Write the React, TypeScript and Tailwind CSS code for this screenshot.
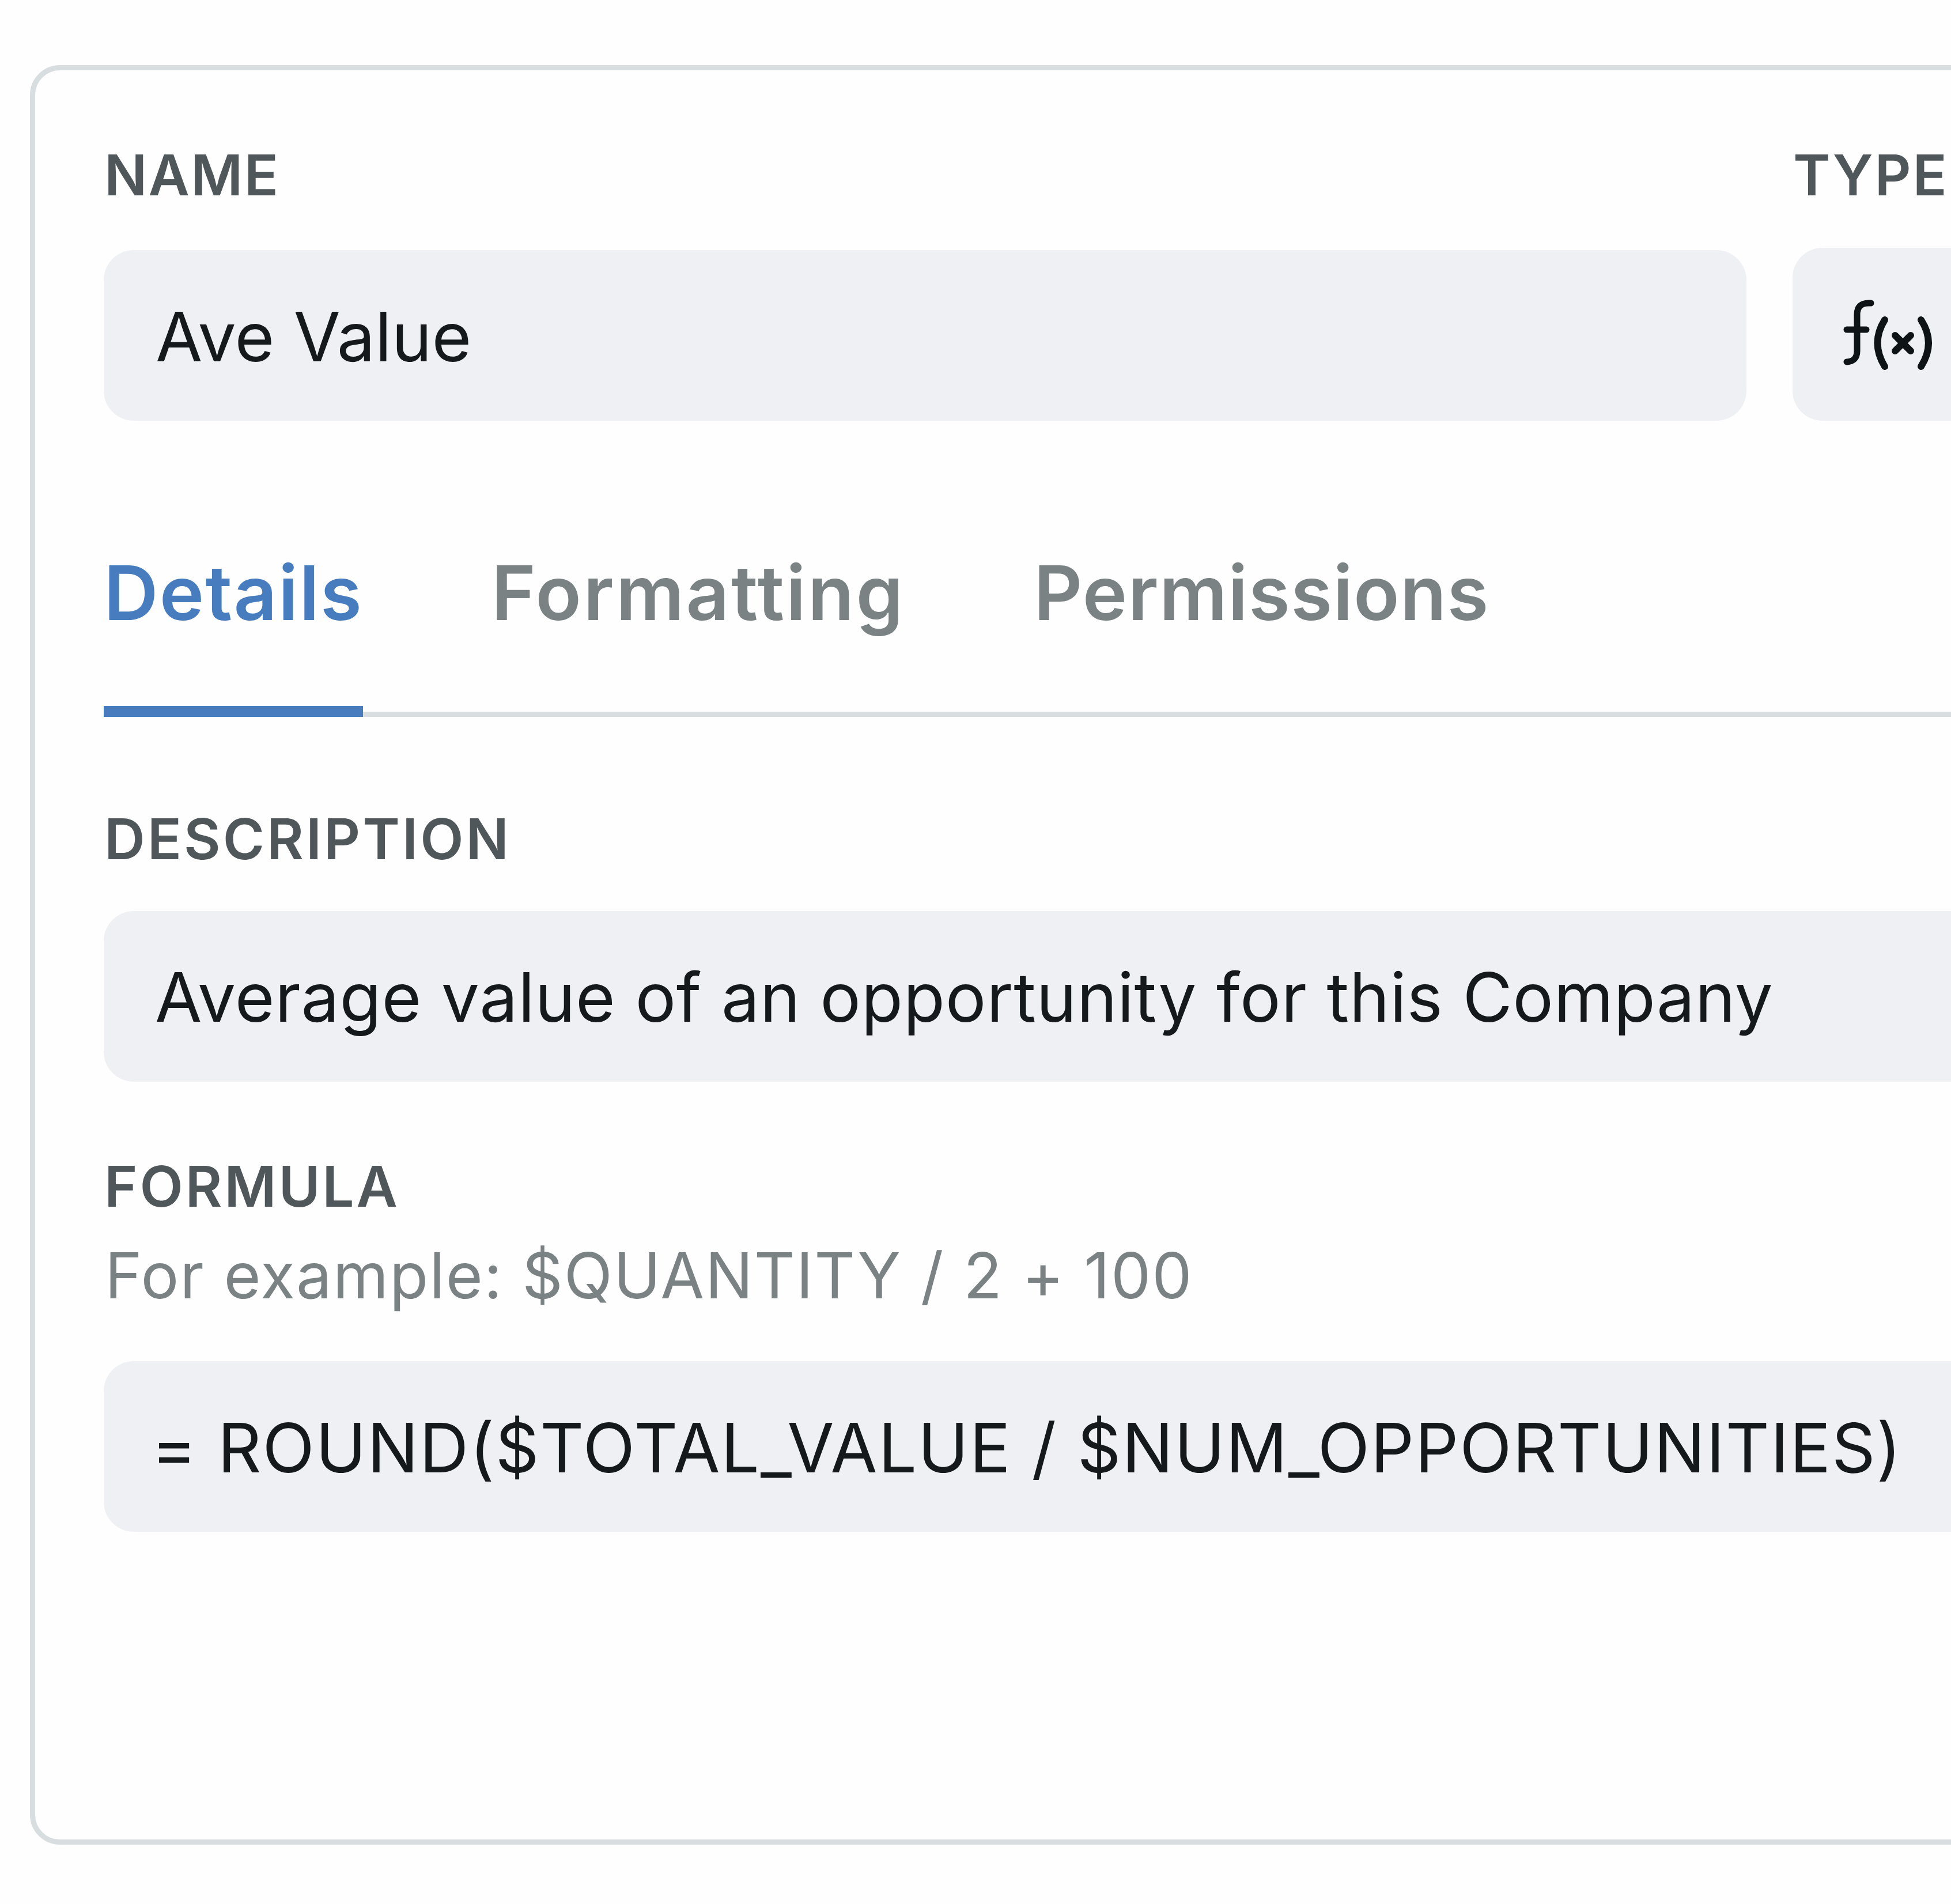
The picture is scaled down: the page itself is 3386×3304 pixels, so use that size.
import React, { useState } from 'react';

type FieldProps = {
  label: string;
  className?: string;
  children: React.ReactNode;
};

const Field: React.FC<FieldProps> = ({ label, className = '', children }) => (
  <div className={`flex flex-col ${className}`}>
    <label className="pl-px text-[98px] leading-[120px] font-[580] text-[#50575b]">{label}</label>
    {children}
  </div>
);

const FunctionIcon: React.FC = () => (
  <svg
    width="160"
    height="130"
    viewBox="0 0 160 130"
    fill="none"
    stroke="currentColor"
    strokeWidth="11"
    strokeLinecap="round"
    strokeLinejoin="round"
  >
    <path d="M52 11H48Q28 11 28 31V94Q28 112 10 113" />
    <path d="M10 57H44" />
    <path d="M76 40Q51 80 76 121" strokeWidth="12" />
    <path d="M139 40Q165 80 139 121" strokeWidth="12" />
    <path d="M94 67L121 94M121 67L94 94" strokeWidth="12" />
  </svg>
);

const tabs = [
  { id: 'details', label: 'Details', tracking: 'tracking-[2.2px]' },
  { id: 'formatting', label: 'Formatting', tracking: 'tracking-[3.4px]' },
  { id: 'permissions', label: 'Permissions', tracking: 'tracking-[1.3px]' },
];

const App: React.FC = () => {
  const [activeTab, setActiveTab] = useState('details');

  return (
    <div className="h-[3304px] w-full overflow-hidden bg-[#fefefe] pt-[113px] pl-[52px] font-['Inter','Liberation_Sans',sans-serif]">
      <div className="h-[3088px] w-[3600px] rounded-[52px] border-[9px] border-[#d8dde0] pt-[122px] pl-[119px]">
        {/* Name and type */}
        <div className="flex items-end gap-20">
          <Field label="NAME" className="w-[2851px] gap-[70px] tracking-[2.2px]">
            <div className="flex h-[296px] items-center rounded-[52px] bg-[#eff0f4] pt-1 pl-[90px] text-[118px] tracking-normal text-[#15191c]">
              Ave Value
            </div>
          </Field>
          <Field label="TYPE" className="flex-1 gap-[66px] tracking-[2.8px]">
            <div className="flex h-[300px] items-center rounded-[52px] bg-[#eff0f4] pl-[84px] text-[#0e1315]">
              <FunctionIcon />
            </div>
          </Field>
        </div>

        {/* Tabs */}
        <div className="mt-[219px] flex gap-[223px] border-b-[9px] border-[#d8dde0]">
          {tabs.map((tab) => (
            <button
              key={tab.id}
              onClick={() => setActiveTab(tab.id)}
              className={`-mb-[9px] border-b-[19px] pb-[116px] text-[131px] leading-[160px] font-[570] ${tab.tracking} ${
                activeTab === tab.id
                  ? 'border-[#477dbf] text-[#477dbf]'
                  : 'border-transparent text-[#7b8284]'
              }`}
            >
              {tab.label}
            </button>
          ))}
        </div>

        {/* Details panel */}
        <Field label="DESCRIPTION" className="mt-[152px] gap-[65px] tracking-[4px]">
          <div className="flex h-[296px] items-center rounded-[52px] bg-[#eff0f4] pt-0.5 pl-[89px] text-[118px] tracking-[0.7px] text-[#15191c]">
            Average value of an opportunity for this Company
          </div>
        </Field>

        <Field label="FORMULA" className="mt-[122px] tracking-[3.8px]">
          <p className="mt-[29px] pl-0.5 text-[110px] leading-[130px] tracking-[1.9px] text-[#7b8284]">
            For example: $QUANTITY / 2 + 100
          </p>
          <div className="mt-[84px] flex h-[296px] items-center rounded-[52px] bg-[#eff0f4] pt-1 pl-[83px] text-[118px] tracking-[1.8px] text-[#15191c]">
            = ROUND($TOTAL_VALUE / $NUM_OPPORTUNITIES)
          </div>
        </Field>
      </div>
    </div>
  );
};

export default App;
